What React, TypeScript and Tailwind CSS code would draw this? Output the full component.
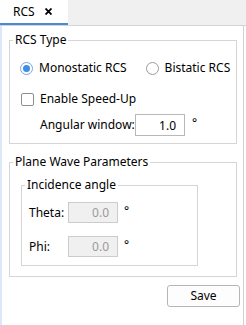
import React, { useState } from 'react';

const Radio = ({ checked, label, onClick }: { checked: boolean; label: string; onClick: () => void }) => (
  <button type="button" onClick={onClick} className="flex items-center gap-[6px]">
    <span
      className={`flex h-[13px] w-[13px] items-center justify-center rounded-full border bg-white ${
        checked ? 'border-[#7aa7dc]' : 'border-[#9a9a9a]'
      }`}
    >
      {checked && <span className="h-[7px] w-[7px] rounded-full bg-[#3d8ee6]" />}
    </span>
    <span>{label}</span>
  </button>
);

const App = () => {
  const [mode, setMode] = useState('mono');
  const [speedUp, setSpeedUp] = useState(false);
  const [angle, setAngle] = useState('1.0');

  return (
    <div className="h-[325px] w-[246px] bg-white text-[12px] leading-[16px] text-black" style={{ fontFamily: '"Noto Sans", "Liberation Sans", sans-serif' }}>
      {/* Tab bar */}
      <div className="flex h-[26px] border-b border-[#d4d4d4] bg-[#f0f0f0]">
        <div className="flex h-[25px] w-[68px] items-center border-b-2 border-[#4a8ad4] bg-white pl-[13px]">
          <span>RCS</span>
          <svg className="ml-[10px]" width="7" height="7" viewBox="0 0 7 7">
            <path d="M0.5 0.5 L6.5 6.5 M6.5 0.5 L0.5 6.5" stroke="#000" strokeWidth="1.8" />
          </svg>
        </div>
      </div>

      {/* Body */}
      <div className="flex h-[299px] w-[244px] flex-col border-l-2 border-r border-l-[#dce8f7] border-r-[#d0d0d0] pl-[7px]">
        {/* RCS Type */}
        <div className="relative mt-[14px] h-[104px] w-[228px] border border-[#d5d5d5]">
          <span className="absolute left-[3px] top-[-9px] bg-white px-[2px]">RCS Type</span>
          <div className="ml-[10px] mt-[19px] flex items-center">
            <Radio checked={mode === 'mono'} label="Monostatic RCS" onClick={() => setMode('mono')} />
            <div className="ml-[19px]">
              <Radio checked={mode === 'bi'} label="Bistatic RCS" onClick={() => setMode('bi')} />
            </div>
          </div>
          <button type="button" onClick={() => setSpeedUp(!speedUp)} className="ml-[11px] mt-[15px] flex items-center gap-[6px]">
            <span className="flex h-[13px] w-[13px] items-center justify-center rounded-[2px] border border-[#8f8f8f] bg-white text-[10px] leading-none">
              {speedUp ? '✓' : ''}
            </span>
            <span>Enable Speed-Up</span>
          </button>
          <div className="ml-[30px] mt-[7px] flex items-center">
            <span className="w-[95px]">Angular window:</span>
            <input
              value={angle}
              onChange={(e) => setAngle(e.target.value)}
              className="h-[22px] w-[50px] border border-[#b8b8b8] px-[8px] text-right outline-none"
            />
            <span className="ml-[7px] -mt-[4px]">°</span>
          </div>
        </div>

        {/* Plane Wave Parameters */}
        <div className="relative mt-[18px] h-[115px] w-[228px] border border-[#d5d5d5]">
          <span className="absolute left-[3px] top-[-9px] bg-white px-[2px]">Plane Wave Parameters</span>
          <div className="relative ml-[11px] mt-[22px] h-[81px] w-[177px] border border-[#d5d5d5]">
            <span className="absolute left-[3px] top-[-9px] bg-white px-[2px]">Incidence angle</span>
            <div className="ml-[7px] mt-[16px] flex items-center">
              <span className="w-[39px]">Theta:</span>
              <input disabled value="0.0" className="h-[21px] w-[50px] border border-[#cccccc] bg-[#f0f0f0] px-[8px] text-right text-[#9a9a9a]" />
              <span className="ml-[6px] -mt-[4px]">°</span>
            </div>
            <div className="ml-[7px] mt-[13px] flex items-center">
              <span className="w-[39px]">Phi:</span>
              <input disabled value="0.0" className="h-[21px] w-[50px] border border-[#cccccc] bg-[#f0f0f0] px-[8px] text-right text-[#9a9a9a]" />
              <span className="ml-[6px] -mt-[4px]">°</span>
            </div>
          </div>
        </div>

        <div className="mt-[8px] flex justify-end pr-[3px]">
          <button type="button" className="h-[22px] w-[73px] rounded-[3px] border border-[#b5b5b5] bg-[#fdfdfd]">
            Save
          </button>
        </div>
      </div>
    </div>
  );
};

export default App;
